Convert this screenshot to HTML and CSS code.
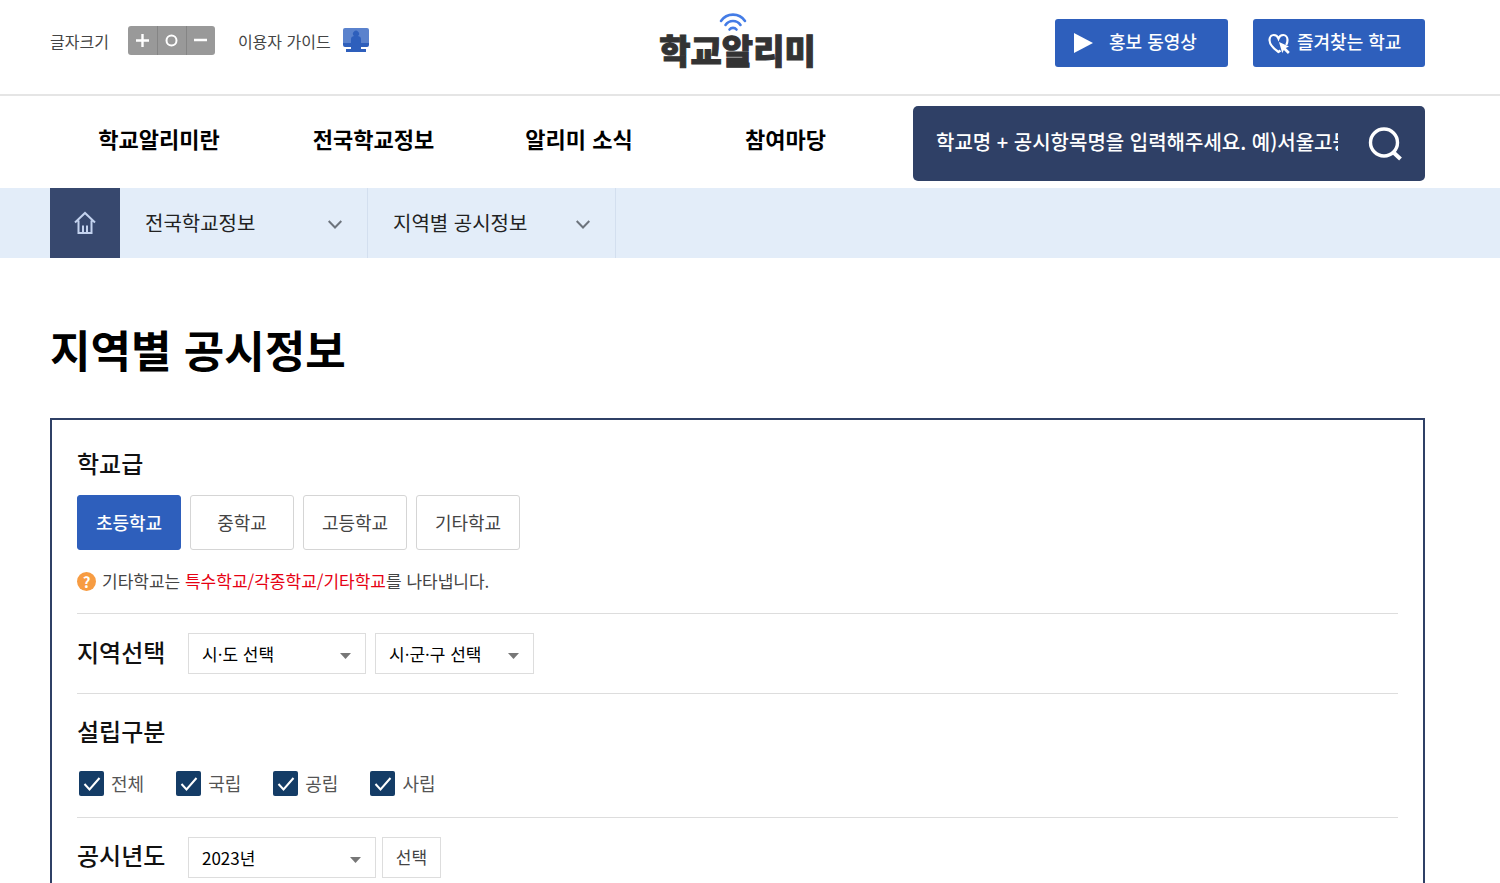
FILE: index.html
```html
<!DOCTYPE html>
<html lang="ko">

<head>
    <meta charset="utf-8">
    <meta name="viewport" content="width=device-width, initial-scale=1">
    <title>지역별 공시정보 | 학교알리미</title>
    <link rel="stylesheet" href="styles.css">
</head>

<body>
    <header class="header">
        <div class="util">
            <span class="util_txt">글자크기</span>
            <div class="zoom">
                <button type="button" aria-label="글자 크게">
                    <svg width="13" height="13" viewBox="0 0 13 13"><path d="M6.5 0v13M0 6.5h13" stroke="#fff" stroke-width="2.4" /></svg>
                </button>
                <button type="button" aria-label="글자 기본">
                    <svg width="13" height="13" viewBox="0 0 13 13"><circle cx="6.5" cy="6.5" r="5" fill="none" stroke="#fff" stroke-width="2" /></svg>
                </button>
                <button type="button" aria-label="글자 작게">
                    <svg width="13" height="13" viewBox="0 0 13 13"><path d="M0 6h13" stroke="#fff" stroke-width="2.4" /></svg>
                </button>
            </div>
            <a href="#" class="guide">이용자 가이드
                <svg width="26" height="26" viewBox="0 0 26 26">
                    <path d="M2 0h22a2 2 0 0 1 2 2v13H0V2a2 2 0 0 1 2-2z" fill="#5a82cd" />
                    <path d="M0 15h8v-4q0-2.500 3-3a3 3 0 1 1 4 0q3 .5 3 3v4h8v2a2 2 0 0 1-2 2h-6v2h5v3H3v-3h5v-2H2a2 2 0 0 1-2-2z" fill="#2e5fbc" />
                </svg>
            </a>
        </div>
        <a href="#" class="logo">
            <svg width="28" height="20" viewBox="0 0 28 20" fill="none" stroke="#447ce6" stroke-width="2.6" stroke-linecap="round">
                <path d="M2 9a14.500 14.500 0 0 1 24 0M6.500 13a9 9 0 0 1 15 0M10.500 17.500a4.500 4.500 0 0 1 7 0" />
            </svg>
            <span>학교알리미</span>
        </a>
        <div class="quick">
            <a href="#" class="btn_quick">
                <svg width="19" height="20" viewBox="0 0 19 20"><path d="M0 0l19 10L0 20z" fill="#fff" /></svg>
                <span>홍보 동영상</span>
            </a>
            <a href="#" class="btn_quick">
                <svg width="22" height="21" viewBox="0 0 22 21">
                    <path d="M12.500 17.500L10.500 19C4.500 15 1.500 11.500 1.500 7c0-3 2-5 4.200-5 2.300 0 4 1.300 4.800 3.500C11.300 3.300 13 2 15.300 2c2.200 0 4.200 2 4.200 5 0 2-.4 3.500-1.300 5" fill="none" stroke="#fff" stroke-width="2.2" />
                    <path d="M11 9l10 4.500-3.200 1.500 4 4-1.900 1.900-4-4-1.700 3z" fill="#fff" />
                </svg>
                <span>즐겨찾는 학교</span>
            </a>
        </div>
    </header>

    <div class="gnb">
        <nav class="menu">
            <a href="#">학교알리미란</a>
            <a href="#">전국학교정보</a>
            <a href="#">알리미 소식</a>
            <a href="#">참여마당</a>
        </nav>
        <form class="search" onsubmit="return false;">
            <input type="text" aria-label="학교 검색" placeholder="학교명 + 공시항목명을 입력해주세요. 예)서울고등학교 학생수">
            <button type="submit" aria-label="검색">
                <svg width="34" height="34" viewBox="0 0 34 34" fill="none" stroke="#fff">
                    <circle cx="16" cy="15.500" r="13.500" stroke-width="3.4" />
                    <path d="M25 25l7.500 7" stroke-width="4" />
                </svg>
            </button>
        </form>
    </div>

    <nav class="location">
        <a href="#" class="home" aria-label="홈">
            <svg width="22" height="24" viewBox="0 0 22 24" fill="none" stroke="#c3d2ee" stroke-width="2">
                <path d="M1 11.500L11 2l10 9.500M4.500 9.500V22h13V9.500M9 22v-7.500M13 14.500V22M9 22h4" />
            </svg>
        </a>
        <a href="#" class="depth">전국학교정보
            <svg width="14" height="9" viewBox="0 0 14 9"><path d="M.7 1L7 7.500 13.300 1" fill="none" stroke="#6d747d" stroke-width="2" /></svg>
        </a>
        <a href="#" class="depth">지역별 공시정보
            <svg width="14" height="9" viewBox="0 0 14 9"><path d="M.7 1L7 7.500 13.300 1" fill="none" stroke="#6d747d" stroke-width="2" /></svg>
        </a>
    </nav>

    <main class="content">
        <h1>지역별 공시정보</h1>
        <form class="panel" onsubmit="return false;">
            <section class="level">
                <h2>학교급</h2>
                <div class="tabs">
                    <button type="button" class="on">초등학교</button>
                    <button type="button">중학교</button>
                    <button type="button">고등학교</button>
                    <button type="button">기타학교</button>
                </div>
                <p class="note">
                    <span class="q">?</span>
                    <span>기타학교는 <em>특수학교/각종학교/기타학교</em>를 나타냅니다.</span>
                </p>
            </section>
            <section class="row">
                <h2><label for="sido">지역선택</label></h2>
                <select id="sido" class="sel_sido">
                    <option>시·도 선택</option>
                </select>
                <select class="sel_gugun" aria-label="시·군·구">
                    <option>시·군·구 선택</option>
                </select>
            </section>
            <section class="found">
                <h2>설립구분</h2>
                <div class="checks">
                    <label><input type="checkbox" checked>전체</label>
                    <label><input type="checkbox" checked>국립</label>
                    <label><input type="checkbox" checked>공립</label>
                    <label><input type="checkbox" checked>사립</label>
                </div>
            </section>
            <section class="row year">
                <h2><label for="year">공시년도</label></h2>
                <select id="year" class="sel_year">
                    <option>2023년</option>
                </select>
                <button type="button" class="btn_sel">선택</button>
            </section>
        </form>
    </main>
</body>

</html>
```

FILE: styles.css
```css
* {
    box-sizing: border-box;
}

body {
    margin: 0;
    background: #fff;
    color: #111;
    font-family: "Noto Sans CJK KR", "Noto Sans", sans-serif;
    font-size: 18px;
    line-height: 26px;
}

a {
    color: inherit;
    text-decoration: none;
}

svg {
    display: block;
    flex: none;
}

button,
input,
select {
    margin: 0;
    font-family: inherit;
}

button {
    cursor: pointer;
}

h1,
h2,
p {
    margin: 0;
}

/* header */
.header {
    display: grid;
    grid-template-columns: 1fr auto 1fr;
    height: 96px;
    padding: 0 75px 0 50px;
    border-bottom: 2px solid #e5e5e5;
}

.util {
    display: flex;
    align-items: center;
    height: 81px;
    color: #444;
    font-size: 16px;
}

.zoom {
    display: flex;
    margin: 0 23px 0 19px;
    overflow: hidden;
    border-radius: 3px;
}

.zoom button {
    display: flex;
    align-items: center;
    justify-content: center;
    width: 29px;
    height: 29px;
    padding: 0;
    border: 0;
    background: #999;
}

.zoom button + button {
    border-left: 1px solid #858585;
}

.guide {
    display: flex;
    align-items: center;
    gap: 12px;
}

.logo {
    display: flex;
    flex-direction: column;
    align-items: center;
    padding-top: 12px;
    color: #333;
    font-size: 34px;
    font-weight: 900;
    line-height: 36px;
    -webkit-text-stroke: 1px #333;
}

.logo svg {
    margin-right: 10px;
}

.quick {
    display: flex;
    justify-content: flex-end;
    gap: 25px;
    padding-top: 19px;
}

.btn_quick {
    display: flex;
    align-items: center;
    gap: 7px;
    width: 172px;
    height: 48px;
    padding: 0 15px;
    border-radius: 3px;
    background: #2e5fbc;
    color: #fff;
    font-weight: 500;
    white-space: nowrap;
}

.btn_quick:first-child {
    gap: 16px;
    width: 173px;
    padding-left: 19px;
}

.btn_quick span {
    padding-bottom: 4px;
}

/* gnb */
.gnb {
    display: flex;
    justify-content: space-between;
    height: 92px;
    padding: 10px 75px 0 50px;
}

.menu {
    display: grid;
    grid-template-columns: 218px 211px 200px 213px;
    padding-top: 16px;
    color: #000;
    font-size: 22px;
    font-weight: 700;
    line-height: 32px;
    text-align: center;
}

.search {
    display: flex;
    align-items: center;
    width: 512px;
    height: 75px;
    padding: 0 23px;
    border-radius: 5px;
    background: #2f4066;
}

.search input {
    flex: 1;
    min-width: 0;
    margin-right: 30px;
    padding: 0 0 4px;
    border: 0;
    outline: 0;
    background: none;
    color: #fff;
    font-size: 20px;
    font-weight: 500;
}

.search input::placeholder {
    color: #fff;
}

.search button {
    padding: 0;
    border: 0;
    background: none;
}

/* location */
.location {
    display: flex;
    height: 70px;
    padding-left: 50px;
    background: #e3edf9;
}

.home {
    display: flex;
    align-items: center;
    justify-content: center;
    width: 70px;
    background: #37486e;
}

.depth {
    display: flex;
    align-items: center;
    justify-content: space-between;
    width: 248px;
    padding: 0 25px;
    border-right: 1px solid #d3dfef;
    color: #222;
    font-size: 20px;
}

.depth svg {
    margin-top: 3px;
}

/* content */
.content {
    padding: 58px 75px 0 50px;
}

h1 {
    color: #000;
    font-size: 44px;
    font-weight: 700;
    line-height: 66px;
}

h2 {
    font-size: 24px;
    font-weight: 500;
    line-height: 36px;
}

.panel {
    margin-top: 36px;
    padding: 25px 25px 60px;
    border: 2px solid #2f4066;
}

.panel section {
    border-bottom: 1px solid #ddd;
}

.panel section.year {
    height: 78px;
    border-bottom: 0;
}

.tabs {
    display: flex;
    gap: 9px;
    margin-top: 14px;
}

.tabs button {
    width: 104px;
    height: 55px;
    padding: 0 0 2px;
    border: 1px solid #d5d5d5;
    border-radius: 3px;
    background: #fff;
    color: #444;
    font-size: 18px;
}

.tabs .on {
    border-color: #2e5fbc;
    background: #2e5fbc;
    color: #fff;
    font-weight: 500;
}

.note {
    display: flex;
    align-items: center;
    gap: 6px;
    padding: 18px 0 19px;
    color: #444;
    font-size: 17px;
}

.note em {
    color: #e60012;
    font-style: normal;
}

.q {
    width: 19px;
    height: 19px;
    border-radius: 50%;
    background: #f79c42;
    color: #fff;
    font-size: 15px;
    font-weight: 700;
    line-height: 19px;
    text-align: center;
}

.row {
    display: flex;
    align-items: center;
    height: 80px;
}

.row h2 {
    width: 111px;
    padding-bottom: 4px;
}

select {
    height: 41px;
    padding: 0 13px;
    border: 1px solid #ddd;
    border-radius: 0;
    appearance: none;
    background: #fff url("data:image/svg+xml,%3Csvg xmlns='http://www.w3.org/2000/svg' width='11' height='6'%3E%3Cpath d='M0 0h11L5.500 6z' fill='%23777'/%3E%3C/svg%3E") no-repeat right 14px top 19px;
    color: #000;
    font-size: 17px;
}

.sel_sido {
    width: 178px;
    margin-right: 9px;
}

.sel_gugun {
    width: 159px;
}

.sel_year {
    width: 188px;
    margin-right: 6px;
}

.found {
    padding: 19px 0 21px;
}

.checks {
    display: flex;
    gap: 32px;
    margin-top: 21px;
    padding-left: 2px;
    color: #555;
}

.checks label {
    display: flex;
    align-items: center;
    gap: 7px;
}

.checks input {
    width: 25px;
    height: 25px;
    appearance: none;
    border-radius: 2px;
    background: #143c66;
}

.checks input:checked {
    background: #143c66 url("data:image/svg+xml,%3Csvg xmlns='http://www.w3.org/2000/svg' width='25' height='25'%3E%3Cpath d='M5.500 13l5 5.500L20.500 7' fill='none' stroke='%23fff' stroke-width='2'/%3E%3C/svg%3E") no-repeat;
}

.btn_sel {
    width: 59px;
    height: 41px;
    padding: 0 0 2px;
    border: 1px solid #ddd;
    background: #fff;
    color: #444;
    font-size: 17px;
}
```
